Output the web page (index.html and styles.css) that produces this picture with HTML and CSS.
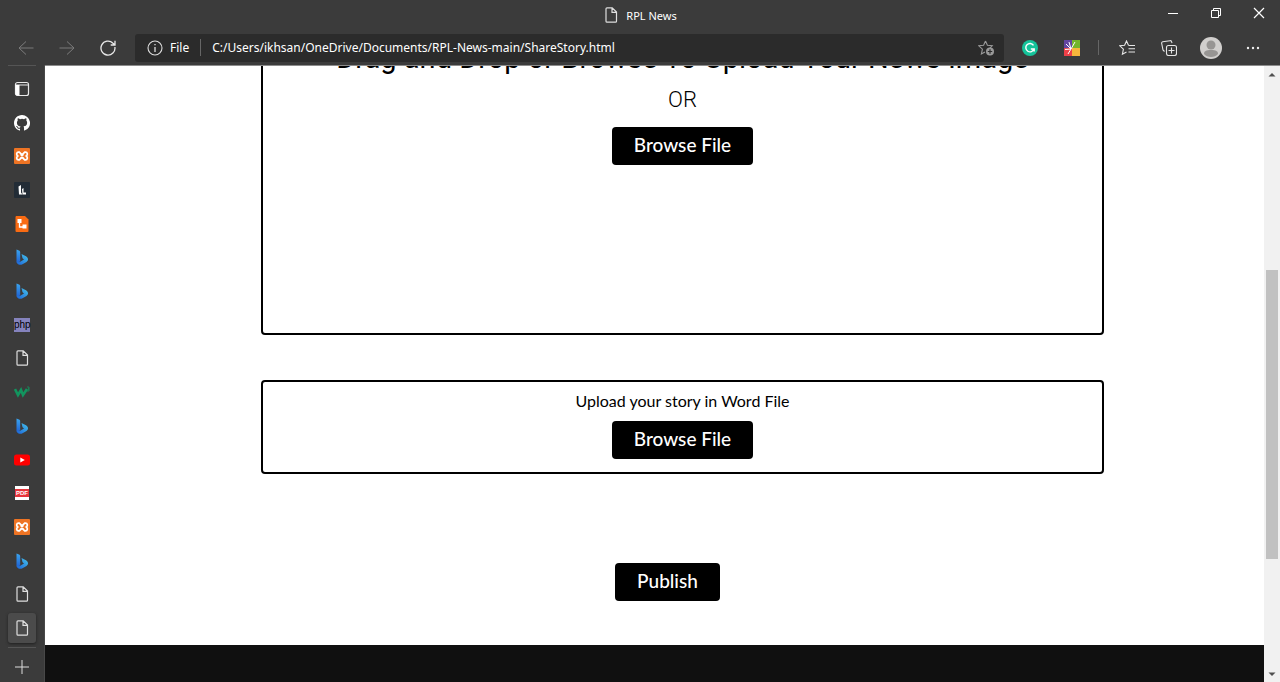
FILE: index.html
```html
<!DOCTYPE html>
<html lang="en">
<head>
<meta charset="utf-8">
<meta name="viewport" content="width=device-width, initial-scale=1">
<title>RPL News</title>
<link rel="stylesheet" href="styles.css">
</head>
<body>
<svg class="defs" aria-hidden="true">
  <linearGradient id="bing-blue" x1="0" y1="0" x2="0" y2="1"><stop offset="0" stop-color="#3aa5ef"/><stop offset="1" stop-color="#1f5fd0"/></linearGradient>
  <linearGradient id="bing-cyan" x1="0" y1="1" x2="1" y2="0"><stop offset="0" stop-color="#1b62d9"/><stop offset="1" stop-color="#45c4ea"/></linearGradient>
  <symbol id="page" viewBox="0 0 16 16"><path d="M4 .8h5.2L13.5 5v9.2a1 1 0 0 1-1 1H4a1 1 0 0 1-1-1V1.800a1 1 0 0 1 1-1zM9 1v4.300h4.300" fill="none" stroke="#dedede" stroke-width="1.200"/></symbol>
  <symbol id="bing" viewBox="0 0 16 16"><path d="M2.500 .5l2.500 1c.8.400 1.200.8 1.200 1.800V12l-2 2.500c-1-.3-1.700-1-1.700-2z" fill="url(#bing-blue)"/><path d="M7.500 5l4.500 2.300c2.500 1.400 2.700 4.200.5 5.700l-4 2.300c-2.500 1.300-5.500.3-6-2.800 1 1.200 2.300 1 3.700.2L10 10.500 8.500 9.200z" fill="url(#bing-cyan)"/></symbol>
  <symbol id="xampp" viewBox="0 0 16 16"><rect width="16" height="16" rx="1" fill="#ee7424"/><path d="M5.300 4.200h-.6a1.900 1.900 0 0 0-1 3.600v.5a1.900 1.900 0 0 0 1 3.600h.6l2-2h1.400l2 2h.6a1.900 1.900 0 0 0 1-3.600v-.5a1.900 1.900 0 0 0-1-3.600h-.6l-2 2H7.300z" fill="none" stroke="#fff" stroke-width="1.700"/><path d="M6.500 6.500l3 3m0-3l-3 3" stroke="#fff" stroke-width="1.200"/></symbol>
</svg>

<header class="chrome">
  <div class="titlebar">
    <div class="window-title"><svg class="icon"><use href="#page"/></svg><span>RPL News</span></div>
    <div class="window-controls">
      <button aria-label="Minimize"><svg class="small-icon" viewBox="0 0 12 12"><path d="M1 6.500h10" stroke="#fff"/></svg></button>
      <button aria-label="Restore"><svg class="small-icon" viewBox="0 0 12 12" fill="none" stroke="#fff"><path d="M1.500 3.500h7v7h-7zM3.500 3.500v-2h7v7h-2"/></svg></button>
      <button aria-label="Close"><svg class="small-icon" viewBox="0 0 12 12"><path d="M1 1l10 10M11 1L1 11" stroke="#fff" stroke-width="1.200"/></svg></button>
    </div>
  </div>
  <div class="toolbar">
    <nav class="history" aria-label="History">
      <button aria-label="Back" disabled><svg class="icon" viewBox="0 0 16 16" fill="none" stroke="#7b7b7b"><path d="M15.500 8H1M8 1.500L1 8l7 6.500"/></svg></button>
      <button aria-label="Forward" disabled><svg class="icon" viewBox="0 0 16 16" fill="none" stroke="#7b7b7b"><path d="M.5 8H15M8 1.500L15 8l-7 6.500"/></svg></button>
      <button aria-label="Refresh"><svg class="icon" viewBox="0 0 16 16" fill="none" stroke="#e8e8e8" stroke-width="1.300"><path d="M14.900 7A7 7 0 1 1 13 3.200L15 5M15 .8V5h-4.300"/></svg></button>
    </nav>
    <div class="address">
      <svg class="icon" viewBox="0 0 16 16"><circle cx="8" cy="8" r="7" fill="none" stroke="#ddd" stroke-width="1.100"/><path d="M8 7v5M8 4v1.300" stroke="#ddd" stroke-width="1.300"/></svg>
      <label for="url">File</label>
      <input id="url" type="text" value="C:/Users/ikhsan/OneDrive/Documents/RPL-News-main/ShareStory.html">
      <button aria-label="Add to favorites"><svg class="icon" viewBox="0 0 16 16"><path d="M7.500 1l1.900 4.300 4.800.5-2.500 2.500M7.500 1L5.600 5.300.8 5.800l3.600 3.400-1 4.800L7 12" fill="none" stroke="#999" stroke-width="1.100"/><circle cx="12" cy="11.500" r="4" fill="#999"/><path d="M9.800 11.500h4.400M12 9.300v4.400" stroke="#2b2b2b" stroke-width="1.200"/></svg></button>
    </div>
    <div class="tools">
      <button aria-label="Grammarly"><svg class="icon" viewBox="0 0 16 16"><circle cx="8" cy="8" r="8" fill="#15c39a"/><path d="M11.500 5.300A4.200 4.200 0 1 0 12 9H8.800M12.200 8.500v3" fill="none" stroke="#fff" stroke-width="1.400"/></svg></button>
      <button aria-label="Color extension"><svg class="icon" viewBox="0 0 16 16"><path d="M0 0h8v8H0z" fill="#6345a0"/><path d="M8 0h8v8H8z" fill="#72b52b"/><path d="M0 8h8v8H0z" fill="#ed4048"/><path d="M8 8h8v8H8z" fill="#f7b63c"/><path d="M7 9L2 4m5 5L5 2m2 7l4-7M7 9L1 9.500M7 9l-3 5" stroke="#fff"/></svg></button>
      <span class="divider"></span>
      <button aria-label="Favorites"><svg class="icon" viewBox="0 0 16 16" fill="none" stroke="#e6e6e6" stroke-width="1.100"><path d="M9.500 5.300L7.500 1 5.600 5.300.8 5.800l3.600 3.400-1 5L7.500 12M9.500 5.500H16M9.500 8.800H16M9.500 12H16"/></svg></button>
      <button aria-label="Collections"><svg class="icon" viewBox="0 0 16 16" fill="none" stroke="#e6e6e6" stroke-width="1.100"><path d="M3.500 11.500L2 10 .7 3.500a1.500 1.500 0 0 1 1-1.800L9 .7a1.500 1.500 0 0 1 1.700 1.200L11 3"/><rect x="5.500" y="5.500" width="10" height="10" rx="2"/><path d="M10.500 7.500v6m-3-3h6"/></svg></button>
      <button aria-label="Profile"><svg class="avatar" viewBox="0 0 22 22"><circle cx="11" cy="11" r="11" fill="#d1cfcd"/><circle cx="11" cy="8" r="4.500" fill="#979593"/><path d="M4 17c0-3 2-4 7-4s7 1 7 4c-3 4-11 4-14 0z" fill="#979593"/></svg></button>
      <button aria-label="Settings and more"><svg class="icon" viewBox="0 0 16 16" fill="#eee"><circle cx="3" cy="8" r="1.200"/><circle cx="8" cy="8" r="1.200"/><circle cx="13" cy="8" r="1.200"/></svg></button>
    </div>
  </div>
</header>

<div class="workspace">
  <aside class="sidebar" aria-label="Tabs">
    <div class="tabs">
      <button aria-label="Tab menu"><svg class="icon" viewBox="0 0 16 16"><rect x="1.500" y="1.500" width="13" height="13" rx="2" fill="none" stroke="#e8e8e8" stroke-width="1.200"/><path d="M2 4h12.500" stroke="#e8e8e8"/><path d="M1.500 4h4v10.500h-3l-1-1z" fill="#fff"/></svg></button>
      <button aria-label="GitHub"><svg class="icon" viewBox="0 0 16 16" fill="#fff"><path d="M8 0C3.580 0 0 3.580 0 8c0 3.540 2.290 6.530 5.470 7.590.4.070.55-.17.55-.38v-1.490c-2.010.37-2.530-.49-2.690-.94-.09-.23-.48-.94-.82-1.130-.28-.15-.68-.52-.01-.53.63-.01 1.080.58 1.230.82.72 1.210 1.870.87 2.330.66.07-.52.28-.87.51-1.070-1.780-.2-3.640-.89-3.640-3.950 0-.87.31-1.590.82-2.150-.08-.2-.36-1.020.08-2.120 0 0 .67-.21 2.200.82a7.500 7.500 0 0 1 4 0c1.530-1.040 2.200-.82 2.200-.82.44 1.100.16 1.920.08 2.120.51.56.82 1.270.82 2.150 0 3.070-1.870 3.750-3.650 3.950.29.25.54.73.54 1.480v2.200c0 .21.15.46.55.38A8 8 0 0 0 8 0z"/></svg></button>
      <button aria-label="XAMPP"><svg class="icon"><use href="#xampp"/></svg></button>
      <button aria-label="Lucid"><svg class="icon" viewBox="0 0 16 16"><rect width="16" height="16" rx="1" fill="#222c36"/><path d="M4.500 4.500L7 3v7.500l1.500 2H5z" fill="#fff"/><path d="M8 7l1.500-1v4.500H12v2H8.500z" fill="#fff"/></svg></button>
      <button aria-label="Lucidchart"><svg class="icon" viewBox="0 0 16 16"><path d="M2 0h9l3.500 3.500V15a1 1 0 0 1-1 1h-11a1 1 0 0 1-1-1V1z" fill="#f96b13"/><path d="M5.500 5v6H10" fill="none" stroke="#fff" stroke-width="1.300"/><path d="M3.500 3h4v4h-4zM8.500 8.500h4v4h-4z" fill="#fff"/></svg></button>
      <button aria-label="Bing"><svg class="icon"><use href="#bing"/></svg></button>
      <button aria-label="Bing"><svg class="icon"><use href="#bing"/></svg></button>
      <button aria-label="phpMyAdmin"><span class="php">php</span></button>
      <button aria-label="Document"><svg class="icon"><use href="#page"/></svg></button>
      <button aria-label="W3Schools"><svg class="icon" viewBox="0 0 16 16" fill="none" stroke="#12945e"><path d="M1 5l3 6 3-5 2 5 4-6" stroke-width="2.600"/><path d="M13 3h2v2h-1 1v2h-2" stroke-width=".8"/></svg></button>
      <button aria-label="Bing"><svg class="icon"><use href="#bing"/></svg></button>
      <button aria-label="YouTube"><svg class="icon" viewBox="0 0 16 16"><rect y="2.500" width="16" height="11" rx="2.500" fill="#f00"/><path d="M6.300 5.500v5l4.500-2.500z" fill="#fff"/></svg></button>
      <button aria-label="PDF"><span class="pdf">PDF</span></button>
      <button aria-label="XAMPP"><svg class="icon"><use href="#xampp"/></svg></button>
      <button aria-label="Bing"><svg class="icon"><use href="#bing"/></svg></button>
      <button aria-label="Document"><svg class="icon"><use href="#page"/></svg></button>
      <button class="current" aria-label="RPL News"><svg class="icon"><use href="#page"/></svg></button>
    </div>
    <button class="new-tab" aria-label="New tab"><svg class="icon" viewBox="0 0 16 16"><path d="M8 1v14M1 8h14" stroke="#ddd"/></svg></button>
  </aside>

  <div class="viewport">
    <main class="story">
      <section class="drop-area">
        <h1>Drag and Drop or Browse To Upload Your News Image</h1>
        <p class="or">OR</p>
        <button class="action">Browse File</button>
      </section>
      <section class="word-area">
        <p>Upload your story in Word File</p>
        <button class="action">Browse File</button>
      </section>
      <div class="publish"><button class="action">Publish</button></div>
    </main>
    <footer class="footer"></footer>
  </div>

  <div class="scrollbar" aria-hidden="true">
    <svg class="arrow" viewBox="0 0 16 16"><path d="M4.500 10.500L8 7l3.500 3.500z" fill="#505050"/></svg>
    <div class="track"><div class="thumb"></div></div>
    <svg class="arrow" viewBox="0 0 16 16"><path d="M4.500 6.500h7L8 10z" fill="#505050"/></svg>
  </div>
</div>
</body>
</html>
```

FILE: styles.css
```css
* { box-sizing: border-box; }
body {
  margin: 0;
  height: 100vh;
  display: flex;
  flex-direction: column;
  overflow: hidden;
  background: #3b3b3b;
  color: #fff;
  font: 12px "Noto Sans", "Open Sans", sans-serif;
}
button {
  padding: 0;
  border: 0;
  background: none;
  color: inherit;
  font: inherit;
  display: grid;
  place-items: center;
}
h1, p { margin: 0; }
.defs { position: absolute; width: 0; height: 0; }
.icon { width: 16px; height: 16px; display: block; }
.small-icon { width: 12px; height: 12px; }
.avatar { width: 22px; height: 22px; }

.titlebar {
  display: grid;
  grid-template-columns: 1fr auto 1fr;
  align-items: center;
  height: 30px;
}
.window-title {
  grid-column: 2;
  display: flex;
  align-items: center;
  gap: 7px;
  font-size: 11px;
}
.window-controls {
  justify-self: end;
  display: flex;
  padding-bottom: 4px;
}
.window-controls button { width: 43px; height: 24px; }

.toolbar {
  display: flex;
  align-items: center;
  height: 35px;
  padding: 0 6px 0 5px;
}
.history { display: flex; width: 130px; }
.history button { width: 41px; height: 28px; }
.address {
  flex: 1;
  display: flex;
  align-items: center;
  height: 28px;
  padding: 0 10px 0 12px;
  border-radius: 3px;
  background: #2b2b2b;
}
.address label {
  margin-left: 7px;
  padding-right: 11px;
  border-right: 1px solid #666;
}
.address input {
  flex: 1;
  min-width: 0;
  padding: 0 11px;
  border: 0;
  background: none;
  color: #fff;
  font: inherit;
}
.tools { display: flex; align-items: center; margin-left: 5px; }
.tools button { width: 42px; height: 28px; }
.divider { width: 1px; height: 15px; margin: 0 7px 0 5px; background: #666; }

.workspace { flex: 1; min-height: 0; display: flex; }
.sidebar {
  width: 45px;
  display: flex;
  flex-direction: column;
  padding: 0 8px;
  border-right: 1px solid #484848;
}
.tabs {
  flex: 1;
  display: grid;
  grid-auto-rows: 1fr;
  padding: 6px 0 2px;
  border-top: 1px solid #555;
  border-bottom: 1px solid #555;
}
.tabs button { min-height: 0; }
.tabs .current {
  margin: 2px 0;
  border-radius: 3px;
  background: #4b4b4b;
  box-shadow: 0 1px 3px #202020;
}
.php {
  width: 16px;
  background: #8583bd;
  color: #000;
  font: 10px/14px "Liberation Sans", sans-serif;
}
.pdf {
  width: 14px;
  border: solid #fff;
  border-width: 3px 0;
  background: #e6343b;
  font: bold 6px/8px "Liberation Sans", sans-serif;
}
.new-tab { height: 34px; width: 27px; padding-top: 4px; }

.viewport {
  flex: 1;
  min-width: 0;
  display: flex;
  flex-direction: column;
  overflow: hidden;
  border-top: 1px solid #8c8c8c;
  background: #fff;
  color: #000;
  font-family: Lato, sans-serif;
}
.story { padding: 0 160px 44px 216px; }
.drop-area, .word-area {
  display: flex;
  flex-direction: column;
  align-items: center;
  border: 2px solid #000;
  border-radius: 4px;
}
.drop-area {
  margin-top: -30px;
  padding-bottom: 168px;
  font-family: Roboto, sans-serif;
}
.drop-area h1 { font-size: 29px; line-height: 40px; font-weight: 400; white-space: nowrap; }
.or { margin: 7px 0 12px; font-size: 22px; line-height: 30px; font-weight: 300; }
.action {
  height: 38px;
  padding: 0 22px 4px;
  border-radius: 4px;
  background: #000;
  color: #fff;
  font: 500 19px Lato, sans-serif;
}
.word-area {
  margin-top: 45px;
  padding: 8px 0 13px;
}
.word-area p { margin-bottom: 10px; font-size: 16px; line-height: 21px; }
.publish {
  display: flex;
  justify-content: center;
  margin: 89px 30px 0 0;
}
.footer { flex: 1; background: #101010; }

.scrollbar {
  width: 16px;
  display: flex;
  flex-direction: column;
  border-top: 1px solid #8c8c8c;
  background: #f1f1f1;
}
.arrow { width: 16px; height: 16px; flex: none; }
.track {
  flex: 1;
  display: grid;
  grid-template-rows: 187fr 288fr 107fr;
  padding: 0 2px;
}
.thumb { grid-row: 2; background: #c1c1c1; }
```
